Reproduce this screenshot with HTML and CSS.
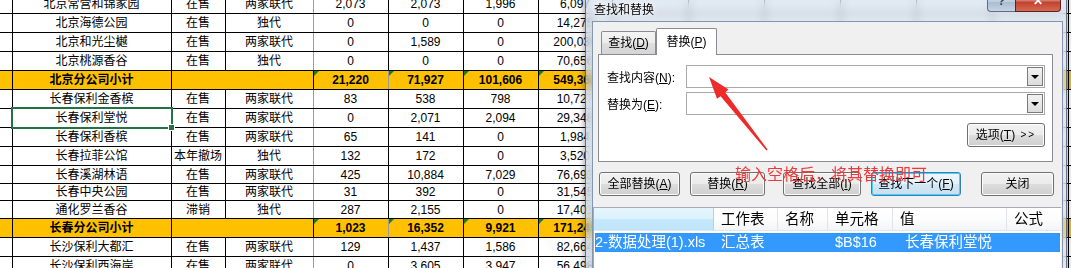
FILE: index.html
```html
<!DOCTYPE html>
<html>
<head>
<meta charset="utf-8">
<link rel="stylesheet" href="styles.css">
</head>
<body>
<table class="grid">
  <colgroup>
    <col class="c-a"><col class="c-b"><col class="c-c"><col class="c-d">
    <col class="c-n"><col class="c-n"><col class="c-n"><col class="c-h">
    <col class="c-x"><col class="c-x"><col class="c-x"><col class="c-x"><col class="c-x"><col class="c-x"><col class="c-x">
  </colgroup>
  <tr class="h19"><td></td><td>北京常营和锦家园</td><td>在售</td><td>两家联代</td><td>2,073</td><td>2,073</td><td>1,996</td><td>6,097</td><td></td><td></td><td></td><td></td><td></td><td></td><td></td></tr>
  <tr class="h19"><td></td><td>北京海德公园</td><td>在售</td><td>独代</td><td>0</td><td>0</td><td>0</td><td>14,275</td><td></td><td></td><td></td><td></td><td></td><td></td><td></td></tr>
  <tr class="h19"><td></td><td>北京和光尘樾</td><td>在售</td><td>两家联代</td><td>0</td><td>1,589</td><td>0</td><td>200,036</td><td></td><td></td><td></td><td></td><td></td><td></td><td></td></tr>
  <tr class="h19"><td></td><td>北京桃源香谷</td><td>在售</td><td>独代</td><td>0</td><td>0</td><td>0</td><td>70,656</td><td></td><td></td><td></td><td></td><td></td><td></td><td></td></tr>
  <tr class="h19 sub"><td></td><td>北京分公司小计</td><td colspan="2"></td><td class="tri">21,220</td><td class="tri">71,927</td><td class="tri">101,606</td><td class="tri">549,362</td><td></td><td></td><td></td><td></td><td></td><td></td><td></td></tr>
  <tr class="h19"><td></td><td>长春保利金香槟</td><td>在售</td><td>两家联代</td><td>83</td><td>538</td><td>798</td><td>10,727</td><td></td><td></td><td></td><td></td><td></td><td></td><td></td></tr>
  <tr class="h19"><td></td><td class="sel">长春保利堂悦</td><td>在售</td><td>两家联代</td><td>0</td><td>2,071</td><td>2,094</td><td>29,348</td><td></td><td></td><td></td><td></td><td></td><td></td><td></td></tr>
  <tr class="h19"><td></td><td>长春保利香槟</td><td>在售</td><td>两家联代</td><td>65</td><td>141</td><td>0</td><td>1,984</td><td></td><td></td><td></td><td></td><td></td><td></td><td></td></tr>
  <tr class="h19"><td></td><td>长春拉菲公馆</td><td>本年撤场</td><td>独代</td><td>132</td><td>172</td><td>0</td><td>3,520</td><td></td><td></td><td></td><td></td><td></td><td></td><td></td></tr>
  <tr class="h18"><td></td><td>长春溪湖林语</td><td>在售</td><td>两家联代</td><td>425</td><td>10,884</td><td>7,029</td><td>76,693</td><td></td><td></td><td></td><td></td><td></td><td></td><td></td></tr>
  <tr class="h17"><td></td><td>长春中央公园</td><td>在售</td><td>两家联代</td><td>31</td><td>392</td><td>0</td><td>31,545</td><td></td><td></td><td></td><td></td><td></td><td></td><td></td></tr>
  <tr class="h18"><td></td><td>通化罗兰香谷</td><td>滞销</td><td>独代</td><td>287</td><td>2,155</td><td>0</td><td>17,401</td><td></td><td></td><td></td><td></td><td></td><td></td><td></td></tr>
  <tr class="h19 sub"><td></td><td>长春分公司小计</td><td colspan="2"></td><td class="tri">1,023</td><td class="tri">16,352</td><td class="tri">9,921</td><td class="tri">171,249</td><td></td><td></td><td></td><td></td><td></td><td></td><td></td></tr>
  <tr class="h19"><td></td><td>长沙保利大都汇</td><td>在售</td><td>两家联代</td><td>129</td><td>1,437</td><td>1,586</td><td>82,664</td><td></td><td></td><td></td><td></td><td></td><td></td><td></td></tr>
  <tr class="h19"><td></td><td>长沙保利西海岸</td><td>在售</td><td>两家联代</td><td>0</td><td>3,605</td><td>3,947</td><td>56,498</td><td></td><td></td><td></td><td></td><td></td><td></td><td></td></tr>
</table>

<div class="dlg">
  <div class="dlg-title">
    <span class="dlg-caption">查找和替换</span>
    <span class="cap-help">?</span>
    <span class="cap-close">✕</span>
  </div>
  <div class="dlg-client">
    <div class="tabs">
      <span class="tab">查找(<u>D</u>)</span>
      <span class="tab on">替换(<u>P</u>)</span>
    </div>
    <div class="panel">
      <div class="field">
        <span class="lbl">查找内容(<u>N</u>):</span>
        <span class="combo"><span class="drop"></span></span>
      </div>
      <div class="field">
        <span class="lbl">替换为(<u>E</u>):</span>
        <span class="combo"><span class="drop"></span></span>
      </div>
      <div class="opt-row">
        <span class="btn opt">选项(<u>T</u>)&nbsp;<span class="more">&gt;&gt;</span></span>
      </div>
    </div>
    <div class="actions">
      <span class="btn b-all">全部替换(<u>A</u>)</span>
      <span class="btn b-rep">替换(<u>R</u>)</span>
      <span class="btn b-fall">查找全部(<u>I</u>)</span>
      <span class="btn b-next">查找下一个(<u>F</u>)</span>
      <span class="btn b-close">关闭</span>
    </div>
    <div class="results">
      <div class="res-head">
        <span class="hc first"></span>
        <span class="hc">工作表</span>
        <span class="hc">名称</span>
        <span class="hc">单元格</span>
        <span class="hc">值</span>
        <span class="hc last">公式</span>
      </div>
      <div class="res-row">
        <span class="rc file">2-数据处理(1).xls</span>
        <span class="rc">汇总表</span>
        <span class="rc"></span>
        <span class="rc">$B$16</span>
        <span class="rc val">长春保利堂悦</span>
        <span class="rc"></span>
      </div>
    </div>
  </div>
</div>

<svg class="arrow" viewBox="700 70 75 85" width="75" height="85">
  <polygon points="709,77 728.5,89.5 725.3,92.5 767.6,149.6 766.4,150.4 720.6,96.3 717,98.8" fill="#ee2a2a"/>
</svg>
<div class="note">输入空格后，将其替换即可</div>
</body>
</html>
```

FILE: styles.css
```css
body {
    margin: 0;
    width: 1071px;
    height: 268px;
    overflow: hidden;
    position: relative;
    background: #fff;
    font-family: "Liberation Sans", "Noto Sans CJK SC", sans-serif;
    font-size: 12px;
    color: #000;
}

/* spreadsheet */
.grid {
    border-collapse: collapse;
    table-layout: fixed;
    width: 1144px;
    margin-top: -6px;
}

.c-a { width: 12px; }
.c-b { width: 159px; }
.c-c { width: 54px; }
.c-d { width: 88px; }
.c-n { width: 75px; }
.c-h { width: 74px; }
.c-x { width: 76px; }

.grid td {
    border: 1px solid #000;
    padding: 0;
    text-align: center;
    vertical-align: middle;
    white-space: nowrap;
    overflow: hidden;
    line-height: 16px;
}

.grid td:first-child {
    border-left: 0;
}

.grid td:nth-child(4) {
    border-right-color: #9b9b9b;
}

.h19 { height: 19px; }
.h18 { height: 18px; }
.h17 { height: 17px; }

.sub td {
    background: #ffc000;
    font-weight: bold;
}

.grid td.tri {
    position: relative;
}

.grid td.tri::before {
    content: "";
    position: absolute;
    left: 0;
    top: 0;
    border-top: 5px solid #1e7b2c;
    border-right: 5px solid transparent;
}

.grid td.sel {
    position: relative;
    overflow: visible;
}

.grid td.sel::after {
    content: "";
    position: absolute;
    left: -2px;
    top: -2px;
    right: -2px;
    bottom: -2px;
    border: 2px solid #217346;
}

.grid td.sel::before {
    content: "";
    position: absolute;
    right: -4px;
    bottom: -4px;
    width: 5px;
    height: 5px;
    background: #217346;
    border: 1px solid #fff;
    z-index: 1;
}

/* find & replace dialog */
.dlg {
    position: absolute;
    left: 585px;
    top: -9px;
    width: 482px;
    height: 290px;
    box-sizing: border-box;
    border: 1px solid rgba(40, 52, 70, .65);
    border-radius: 7px 7px 0 0;
    padding: 0 3px 0 6px;
    background: rgba(206, 219, 234, .62);
    backdrop-filter: blur(4px);
    box-shadow: 0 0 7px rgba(0, 0, 0, .45);
}

.dlg-title {
    height: 29px;
    display: flex;
    align-items: flex-start;
    margin-left: -6px;
    margin-right: -3px;
    padding: 0 5px 0 8px;
}

.dlg-caption {
    margin-top: 10px;
    line-height: 16px;
    text-shadow: 0 0 6px #fff, 0 0 3px #fff;
}

.cap-help,
.cap-close {
    height: 20px;
    box-sizing: border-box;
    text-align: center;
    line-height: 18px;
    color: #fff;
    font-weight: bold;
}

.cap-help {
    margin-left: auto;
    width: 28px;
    border: 1px solid #5d6f86;
    border-top: 0;
    border-right: 0;
    border-radius: 0 0 0 4px;
    background: linear-gradient(#d9e3ee, #bfcddd 50%, #a9bbd0 51%, #c6d4e3);
    color: #3a4a5e;
    font-size: 13px;
}

.cap-close {
    width: 46px;
    border: 1px solid #5a2521;
    border-top: 0;
    border-radius: 0 0 4px 0;
    background: linear-gradient(#e9a99c, #d47868 45%, #c2432f 55%, #d56a50);
    font-size: 12px;
}

.dlg-client {
    height: 280px;
    box-sizing: border-box;
    border: 1px solid #8695a9;
    background: #f0f0f0;
}

.tabs {
    display: flex;
    align-items: flex-end;
    height: 26px;
    margin: 6px 0 0 8px;
}

.tab {
    box-sizing: border-box;
    height: 23px;
    width: 55px;
    border: 1px solid #898c95;
    border-bottom: 0;
    border-radius: 2px 2px 0 0;
    background: linear-gradient(#f4f4f4, #ececec 50%, #dfdfdf 51%, #d4d4d4);
    text-align: center;
    line-height: 22px;
}

.tab.on {
    width: 61px;
    height: 27px;
    margin-bottom: -1px;
    background: #fff;
    position: relative;
    z-index: 1;
    line-height: 26px;
}

.panel {
    width: 455px;
    height: 108px;
    margin-left: 5px;
    box-sizing: border-box;
    border: 1px solid #898c95;
    background: #fff;
    padding: 10px 7px 0 8px;
}

.field {
    display: flex;
    align-items: center;
    height: 23px;
    margin-bottom: 4px;
}

.lbl {
    width: 79px;
}

.combo {
    width: 359px;
    height: 23px;
    box-sizing: border-box;
    border: 1px solid #a9a9a9;
    background: #fff;
    display: flex;
    justify-content: flex-end;
    padding: 1px;
}

.drop {
    width: 16px;
    box-sizing: border-box;
    border: 1px solid #7a7a7a;
    background: linear-gradient(#f2f2f2, #dcdcdc);
    display: flex;
    align-items: center;
    justify-content: center;
}

.drop::after {
    content: "";
    border-top: 4px solid #000;
    border-left: 4px solid transparent;
    border-right: 4px solid transparent;
}

.opt-row {
    display: flex;
    justify-content: flex-end;
    margin-top: 8px;
}

.btn {
    box-sizing: border-box;
    height: 24px;
    border: 1px solid #707070;
    border-radius: 3px;
    background: linear-gradient(#f2f2f2, #ebebeb 50%, #dddddd 51%, #cfcfcf);
    box-shadow: inset 0 0 0 1px #fcfcfc;
    display: flex;
    align-items: center;
    justify-content: center;
    line-height: 16px;
}

.opt {
    width: 78px;
}

.more {
    font-size: 10px;
    letter-spacing: 2px;
    margin-left: 2px;
}

.actions {
    display: flex;
    margin: 10px 0 0 6px;
}

.b-all { width: 81px; }
.b-rep { width: 75px; margin-left: 10px; }
.b-fall { width: 78px; margin-left: 18px; }
.b-next {
    width: 90px;
    margin-left: 10px;
    border-color: #3c7fb1;
    box-shadow: inset 0 0 0 1px #48d1ff;
    background: linear-gradient(#eef7fc, #e4f1f9 50%, #d3e8f5 51%, #c6dfef);
}
.b-close { width: 73px; margin-left: 20px; }

.results {
    margin-top: 11px;
    width: 468px;
    height: 80px;
    box-sizing: border-box;
    border: 1px solid #a7abb0;
    border-right: 0;
    background: #fff;
    font-size: 14.5px;
}

.res-head,
.res-row {
    display: grid;
    grid-template-columns: 120px 64px 50px 65px 114px 1fr;
}

.res-head {
    height: 22px;
    background: linear-gradient(#fff, #fdfdfe 50%, #f3f4f6);
    border-bottom: 1px solid #e4e6e9;
}

.hc {
    border-right: 1px solid #e1e5ea;
    padding-left: 7px;
    line-height: 22px;
}

.hc.first {
    background: linear-gradient(#e6f6fd, #dbf1fc 50%, #c5e8fb 51%, #bfe5fa);
    border-right-color: #a8d6ef;
}

.hc.last {
    border-right: 0;
}

.res-row {
    height: 19px;
    margin: 2px 1px 0 1px;
    box-sizing: border-box;
    background: #3399ff;
    outline: 1px dotted #c46a2a;
    outline-offset: -1px;
    color: #fff;
    grid-template-columns: 119px 64px 50px 65px 114px 1fr;
}

.rc {
    padding-left: 7px;
    line-height: 19px;
    white-space: nowrap;
}

.rc.file {
    padding-left: 0;
}

.rc.val {
    padding-left: 12px;
}

/* red annotation */
.arrow {
    position: absolute;
    left: 700px;
    top: 70px;
}

.note {
    position: absolute;
    left: 735px;
    top: 165px;
    font-family: "Noto Sans CJK SC", sans-serif;
    font-size: 16px;
    line-height: 17px;
    color: #f03a3a;
    white-space: nowrap;
}
```
